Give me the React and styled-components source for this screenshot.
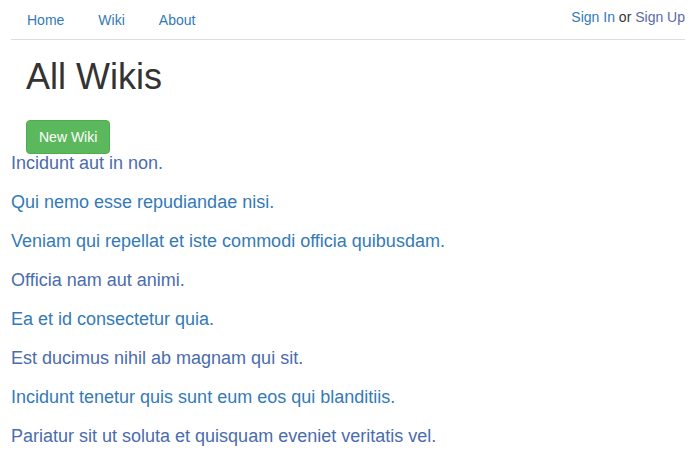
import React from "react";
import styled, { createGlobalStyle } from "styled-components";

const GlobalStyle = createGlobalStyle`
  body {
    margin: 0;
    font-family: "Liberation Sans", Arial, Helvetica, sans-serif;
    font-size: 14px;
    line-height: 1.42857;
    color: #333;
    background: #fff;
  }
`;

const Page = styled.div`
  padding: 0 9px 0 11px;
`;

// 상단 네비게이션 (bootstrap nav-tabs 느낌)
const NavBar = styled.div`
  display: flex;
  justify-content: space-between;
  align-items: flex-start;
  border-bottom: 1px solid #ddd;
`;

const NavList = styled.ul`
  display: flex;
  list-style: none;
  margin: 0;
  padding: 0 0 0 1px;
`;

const NavLink = styled.a`
  display: block;
  padding: 10px 15px 9px;
  margin-right: 4px;
  line-height: 20px;
  color: #337ab7;
  text-decoration: none;
`;

const Auth = styled.div`
  padding-top: 7px;
  line-height: 20px;
  color: #333;
`;

const AuthLink = styled.a`
  color: ${(props) => (props.visited ? "#5a6aa8" : "#337ab7")};
  text-decoration: none;
`;

const Header = styled.div`
  padding: 0 15px;
`;

const Title = styled.h1`
  margin: 17px 0 23px;
  font-size: 36px;
  font-weight: 500;
  line-height: 39.6px;
  color: #333;
`;

const GreenBtn = styled.button`
  display: inline-block;
  padding: 6px 12px;
  font-family: inherit;
  font-size: 14px;
  line-height: 20px;
  color: #fff;
  background: #5cb85c;
  border: 1px solid #4cae4c;
  border-radius: 4px;
`;

const WikiList = styled.div`
  display: flex;
  flex-direction: column;
  gap: 19px;
  margin-top: -1px;
`;

const WikiLink = styled.a`
  font-size: 18px;
  line-height: 20px;
  color: ${(props) => (props.visited ? "#4a6cad" : "#337ab7")};
  text-decoration: none;
`;

const wikis = [
  { title: "Incidunt aut in non.", visited: true },
  { title: "Qui nemo esse repudiandae nisi." },
  { title: "Veniam qui repellat et iste commodi officia quibusdam." },
  { title: "Officia nam aut animi.", visited: true },
  { title: "Ea et id consectetur quia." },
  { title: "Est ducimus nihil ab magnam qui sit.", visited: true },
  { title: "Incidunt tenetur quis sunt eum eos qui blanditiis." },
  { title: "Pariatur sit ut soluta et quisquam eveniet veritatis vel.", visited: true },
];

function App() {
  return (
    <Page>
      <GlobalStyle />
      <NavBar>
        <NavList>
          <li><NavLink href="#">Home</NavLink></li>
          <li><NavLink href="#">Wiki</NavLink></li>
          <li><NavLink href="#">About</NavLink></li>
        </NavList>
        <Auth>
          <AuthLink href="#">Sign In</AuthLink> or{" "}
          <AuthLink href="#" visited>Sign Up</AuthLink>
        </Auth>
      </NavBar>

      <Header>
        <Title>All Wikis</Title>
        <GreenBtn>New Wiki</GreenBtn>
      </Header>

      <WikiList>
        {wikis.map((w, i) => (
          <WikiLink href="#" key={i} visited={w.visited}>
            {w.title}
          </WikiLink>
        ))}
      </WikiList>
    </Page>
  );
}

export default App;
